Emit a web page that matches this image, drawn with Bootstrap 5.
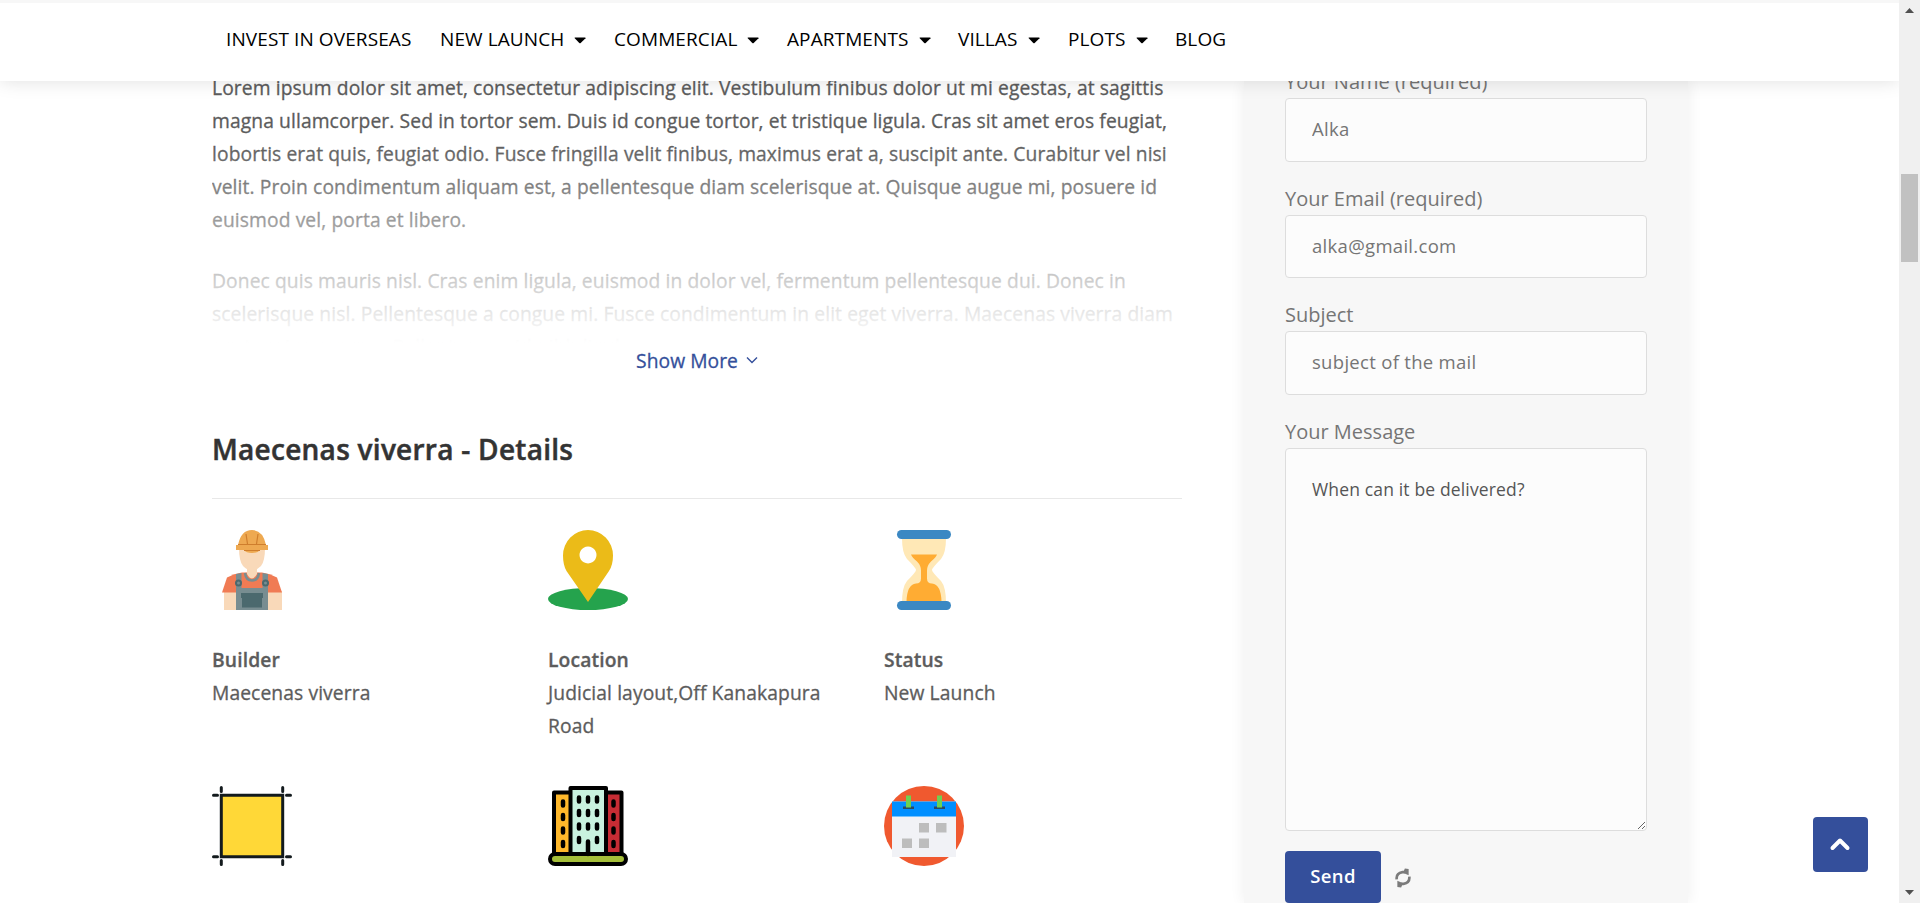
<!DOCTYPE html>
<html lang="en">
<head>
<meta charset="utf-8">
<meta name="viewport" content="width=device-width, initial-scale=1">
<title>Maecenas viverra</title>
<link rel="stylesheet" href="https://cdn.jsdelivr.net/npm/bootstrap@5.3.0/dist/css/bootstrap.min.css">
<style>
body{font-family:"Open Sans","Noto Sans",sans-serif;font-size:19px;line-height:33px;color:#5c5c5c;height:903px;background:#fff}
.page{width:1899px;height:903px}
.topbar{height:81px;border-top:3px solid #f7f7f7;padding:0 0 6px 226px;z-index:5;box-shadow:0 0 18px rgba(0,0,0,.13);clip-path:inset(0 0 -30px 0)}
.topbar .nav-link{color:#000;padding:0;white-space:nowrap;line-height:33px;letter-spacing:.1px}
.topbar svg{margin-left:10px;vertical-align:2px}
.body-row{height:822px;padding-left:212px}
.article{width:970px;margin-right:62px;font-size:19.25px;-webkit-text-stroke:.3px currentColor;letter-spacing:.1px}
.excerpt{height:262px}
.excerpt p{margin:0 -12px 28px 0;white-space:nowrap}
.excerpt p:first-child{margin-top:-10px}
.fade-veil{left:0;right:-12px;top:60px;bottom:0;background:linear-gradient(rgba(255,255,255,0),#fff)}
.more-link{color:#344f9b;text-decoration:none;height:37px;padding-bottom:3px;letter-spacing:.05px}
.section-title{font-size:28px;font-weight:600;color:#333;line-height:36px;margin:51px 0 0;padding-bottom:31px;border-bottom:1px solid #e8e8e8;letter-spacing:.27px;-webkit-text-stroke:.5px currentColor}
.detail-grid{padding-top:31px}
.detail{width:336px;height:256px}
.detail svg{display:block;margin-bottom:32.500px}
.detail div{max-width:300px}
.detail strong{font-weight:600;display:block;letter-spacing:.12px}
.enquiry{width:444px;background:#f7f7f7;padding:0 41px;box-shadow:0 0 14px rgba(0,0,0,.07);color:#757575}
.enquiry form{margin-top:-16px}
.enquiry label{display:block;height:33px;font-size:20px;letter-spacing:0}
.enquiry .form-control{background:#fcfcfc;border:1px solid #ddd;border-radius:4px;color:#757575;padding:0 26px 2px;font-size:18.500px;height:63.5px;margin-bottom:20px;box-shadow:none;letter-spacing:.3px}
.enquiry textarea.form-control{height:383px;color:#555;padding:24px 26px;font-size:17.500px;line-height:33px;margin-bottom:20px;letter-spacing:.15px}
.send-btn{width:96px;height:52px;background:#344f9b;color:#fff;font-weight:600;border-radius:4px;font-size:18.500px;padding:0 0 1px;letter-spacing:.4px}
.to-top{left:1813px;top:817px;width:55px;height:55px;background:#344f9b;border-radius:4px;z-index:6;padding:0 1px 1px 0}
.scroll-rail{width:21px;height:903px;background:#f0f0f0;padding:8px 0 8px 2px}
.scroll-thumb{width:17px;height:88px;background:#c1c1c1;margin-top:161px}
</style>
</head>
<body class="overflow-hidden d-flex">
<div class="page position-relative overflow-hidden">
<header class="topbar position-relative bg-white d-flex align-items-center">
<nav class="nav flex-nowrap" id="mainNav">
<a class="nav-link" href="#" style="width:214px">INVEST IN OVERSEAS</a>
<a class="nav-link" href="#" style="width:174px">NEW LAUNCH<svg width="12" height="7"><path d="M.5 1Q.5.5 1 .5H11q.8 0 .5.8L6.7 6q-.7.6-1.4 0z"/></svg></a>
<a class="nav-link" href="#" style="width:173px">COMMERCIAL<svg width="12" height="7"><path d="M.5 1Q.5.5 1 .5H11q.8 0 .5.8L6.7 6q-.7.6-1.4 0z"/></svg></a>
<a class="nav-link" href="#" style="width:171px">APARTMENTS<svg width="12" height="7"><path d="M.5 1Q.5.5 1 .5H11q.8 0 .5.8L6.7 6q-.7.6-1.4 0z"/></svg></a>
<a class="nav-link" href="#" style="width:110px">VILLAS<svg width="12" height="7"><path d="M.5 1Q.5.5 1 .5H11q.8 0 .5.8L6.7 6q-.7.6-1.4 0z"/></svg></a>
<a class="nav-link" href="#" style="width:107px">PLOTS<svg width="12" height="7"><path d="M.5 1Q.5.5 1 .5H11q.8 0 .5.8L6.7 6q-.7.6-1.4 0z"/></svg></a>
<a class="nav-link" href="#">BLOG</a>
</nav>
</header>
<div class="body-row d-flex">
<main class="article flex-shrink-0">
<div class="excerpt position-relative overflow-hidden">
<p>Lorem ipsum dolor sit amet, consectetur adipiscing elit. Vestibulum finibus dolor ut mi egestas, at sagittis<br>magna ullamcorper. Sed in tortor sem. Duis id congue tortor, et tristique ligula. Cras sit amet eros feugiat,<br>lobortis erat quis, feugiat odio. Fusce fringilla velit finibus, maximus erat a, suscipit ante. Curabitur vel nisi<br>velit. Proin condimentum aliquam est, a pellentesque diam scelerisque at. Quisque augue mi, posuere id<br>euismod vel, porta et libero.</p>
<p>Donec quis mauris nisl. Cras enim ligula, euismod in dolor vel, fermentum pellentesque dui. Donec in<br>scelerisque nisl. Pellentesque a congue mi. Fusce condimentum in elit eget viverra. Maecenas viverra diam<br>eget varius congue. Pellentesque id nibh ligula.</p>
<div class="fade-veil position-absolute"></div>
</div>
<a class="more-link d-flex justify-content-center align-items-center" href="#">Show More<svg class="ms-2" width="12" height="8" fill="none" stroke="#344f9b" stroke-width="1.4"><path d="M1 1.5l5 5 5-5"/></svg></a>
<h2 class="section-title">Maecenas viverra - Details</h2>
<div class="detail-grid d-flex flex-wrap" style="width:1008px">
<div class="detail">
<svg width="80" height="80" viewBox="0 0 80 80"><path d="M12 61h58v19H12z" fill="#f9d9b9"/><path d="M10 62.500l5-15q7-4 15-5h20q8 1 15 5l5 15z" fill="#f07b54"/><path d="M35 36h10v8q-5 9-10 0z" fill="#f9d9b9"/><path d="M27 18h26q0 13-4 18-9 9-18 0-4-5-4-18z" fill="#f9d9b9"/><path d="M33 43q1 7.500 7 7.500T47 43" fill="none" stroke="#788d91" stroke-width="2.500"/><path d="M24 44l5.500-1v15h21V43l5.500 1v36H24z" fill="#788d91"/><g fill="#4b696e"><path d="M30 65h20v12.500H30zM29 63h22v5H29z"/><circle cx="26.500" cy="53" r="3.500"/><circle cx="53.500" cy="53" r="3.500"/></g><circle cx="26.500" cy="53" r="1.500" fill="#788d91"/><circle cx="53.500" cy="53" r="1.500" fill="#788d91"/><path d="M24 20v-5h2Q29 0 40 0t14 15h2v5H48q-2 3-8 3t-8-3z" fill="#eea951"/><path d="M26 14.500h28M32 20.500h16M34 4l1.500 10M46 4l-1.500 10" stroke="#cf7e2d" stroke-width="1.200" fill="none"/></svg>
<div><strong>Builder</strong>Maecenas viverra</div></div>
<div class="detail">
<svg width="80" height="80" viewBox="0 0 80 80"><ellipse cx="40" cy="69" rx="40" ry="11" fill="#25a34d"/><path fill-rule="evenodd" d="M40 72L18.500 41Q15 35 15 25.500a25 25.500 0 0 1 50 0Q65 35 61 41zM40 16.500a8.500 8.500 0 1 0 .01 0z" fill="#ebbb18"/></svg>
<div><strong>Location</strong>Judicial layout,Off Kanakapura<br>Road</div></div>
<div class="detail">
<svg width="80" height="80" viewBox="0 0 80 80"><path d="M18 8h44q0 15-5 21-9 9-9 11t9 11q5 6 5 22H18q0-16 5-22 9-9 9-11t-9-11Q18 23 18 8z" fill="#ffe8b6"/><path d="M27 24.500h26q-1 3-6 7-4 4-4 9v8q0 5 5 5 9 1 9.500 18h-35Q23 54.500 32 53.500q5 0 5-5v-8q0-5-4-9-5-4-6-7z" fill="#ffac33"/><rect x="13" width="54" height="9" rx="4.500" fill="#3b88c3"/><rect x="13" y="71" width="54" height="9" rx="4.500" fill="#3b88c3"/></svg>
<div><strong>Status</strong>New Launch</div></div>
<div class="detail">
<svg width="80" height="80" viewBox="0 0 80 80"><path d="M9.300 9.300h61.400v61.400H9.300z" fill="#ffd837" stroke="#131a1d" stroke-width="3"/><path d="M9.300 1.500v4M70.700 1.500v4M9.300 74.500v4M70.700 74.500v4M1.500 9.300h4M74.500 9.300h4M1.500 70.700h4M74.500 70.700h4" stroke="#131a1d" stroke-width="3" stroke-linecap="round"/></svg>
</div>
<div class="detail">
<svg width="80" height="80" viewBox="0 0 80 80" stroke="#000" stroke-width="4" stroke-linejoin="round"><path d="M6 6.500h17V68H6z" fill="#ffb82b"/><path d="M58 6.500h15.500V68H58z" fill="#c72c34"/><path d="M22.500 2h35.500v66H22.500z" fill="#c9f2df"/><rect x="2" y="68" width="76" height="10" rx="5" fill="#a5bf39"/><path d="M15 15.500v4m0 9.500v4m0 9.500v4m0 9.500v4M65.500 15.500v4m0 9.500v4m0 9.500v4m0 9.500v4M31 11.500v4m0 9.500v4m0 9.500v4m0 9.500v4M40 11.500v4m0 9.500v4m0 9.500v4M49 11.500v4m0 9.500v4m0 9.500v4m0 9.500v4M40 55.500V68" fill="none" stroke-width="4.500" stroke-linecap="round"/></svg>
</div>
<div class="detail">
<svg width="80" height="80" viewBox="0 0 80 80"><circle cx="40" cy="40" r="40" fill="#f0592f"/><path d="M8 15.500h64V71H8z" fill="#f1f2f6"/><path d="M8 15.500h64v15H8z" fill="#018fff"/><path d="M19 20.500h11V23H19zM50 20.500h11V23H50z" fill="#2d4a60"/><path d="M22 9.500h5v12h-5zM53 9.500h5v12h-5z" fill="#6ed052"/><path d="M35 37h10v9.500H35zM52 37h10.500v9.500H52zM18 52.500h10V62H18zM35 52.500h10V62H35z" fill="#bdbdbd"/></svg>
</div>
</div>
</main>
<aside class="enquiry flex-shrink-0">
<form>
<label for="nm">Your Name (required)</label><input id="nm" class="form-control" value="Alka">
<label for="em">Your Email (required)</label><input id="em" class="form-control" value="alka@gmail.com">
<label for="sb">Subject</label><input id="sb" class="form-control" value="subject of the mail">
<label for="ms">Your Message</label><textarea id="ms" class="form-control">When can it be delivered?</textarea>
<div class="d-flex align-items-center"><button type="button" class="btn send-btn border-0">Send</button>
<svg style="margin-left:14px;margin-top:2px" width="16" height="20" viewBox="0 0 17 20"><g fill="none" stroke="#7b7b7b" stroke-width="2.800"><path d="M1.800 11.500Q1 5 8 3.800h3M15.200 8.500Q16 15 9 16.200H6"/></g><path d="M10.500 0l4 .5v6.500l-6-2.500zM6.500 20l-4-.5V13l6 2.500z" fill="#7b7b7b"/></svg></div>
</form>
</aside>
</div>
<a class="to-top position-absolute d-flex align-items-center justify-content-center" href="#" aria-label="Back to top"><svg width="22" height="14" fill="none" stroke="#fff" stroke-width="4" stroke-linecap="round" stroke-linejoin="round"><path d="M3.500 11L11 3.500l7.500 7.500"/></svg></a>
</div>
<div class="scroll-rail d-flex flex-column flex-shrink-0">
<svg width="17" height="5"><path d="M4 5h9L8.500 0z" fill="#505050"/></svg>
<div class="scroll-thumb"></div>
<svg class="mt-auto" width="17" height="5"><path d="M4 0h9L8.500 5z" fill="#505050"/></svg>
</div>
<script src="https://cdn.jsdelivr.net/npm/bootstrap@5.3.0/dist/js/bootstrap.bundle.min.js"></script>
</body>
</html>
